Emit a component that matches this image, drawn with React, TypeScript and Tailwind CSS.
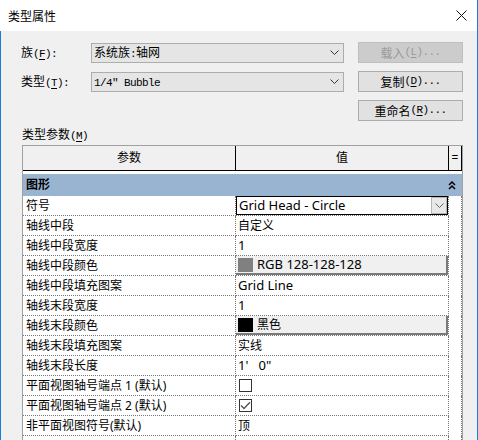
import React from "react";

// 类型属性 dialog (Revit type properties)

const ui = "font-['Noto_Sans_CJK_SC',sans-serif]";
const grid = "font-['Noto_Sans','Noto_Sans_CJK_SC',sans-serif]";

function M({ children }: { children: React.ReactNode }) {
  return (
    <span className="font-['Liberation_Mono',monospace] text-[11px] tracking-[-0.6px]">{children}</span>
  );
}

function U({ children }: { children: React.ReactNode }) {
  return <span className="underline underline-offset-2">{children}</span>;
}

function Chevron({ color = "#333" }: { color?: string }) {
  return (
    <svg width="9" height="5" viewBox="0 0 9 5">
      <path d="M0.5 0.5 L4.5 4.5 L8.5 0.5" fill="none" stroke={color} strokeWidth="1" />
    </svg>
  );
}

function Select({ children }: { children: React.ReactNode }) {
  return (
    <div className="flex h-[20px] w-[253px] items-center justify-between border border-[#adadad] bg-[#e5e5e5] pl-[2px] pr-[4px]">
      <span className="leading-none">{children}</span>
      <Chevron />
    </div>
  );
}

function Btn({ children, disabled }: { children: React.ReactNode; disabled?: boolean }) {
  return (
    <div
      className={
        disabled
          ? "flex h-[21px] w-[105px] items-center justify-center border border-[#bfbfbf] bg-[#cccccc] text-[#9a9a9a]"
          : "flex h-[21px] w-[105px] items-center justify-center border border-[#adadad] bg-[#e1e1e1] text-black"
      }
    >
      {children}
    </div>
  );
}

type Val =
  | { kind: "text"; text: string; latin?: boolean }
  | { kind: "combo"; text: string }
  | { kind: "color"; swatch: string; text: string; latin?: boolean }
  | { kind: "check"; checked: boolean }
  | { kind: "none" };

const rows: { label: string; value: Val }[] = [
  { label: "符号", value: { kind: "combo", text: "Grid Head - Circle" } },
  { label: "轴线中段", value: { kind: "text", text: "自定义" } },
  { label: "轴线中段宽度", value: { kind: "text", text: "1", latin: true } },
  { label: "轴线中段颜色", value: { kind: "color", swatch: "#808080", text: "RGB 128-128-128", latin: true } },
  { label: "轴线中段填充图案", value: { kind: "text", text: "Grid Line", latin: true } },
  { label: "轴线末段宽度", value: { kind: "text", text: "1", latin: true } },
  { label: "轴线末段颜色", value: { kind: "color", swatch: "#000000", text: "黑色" } },
  { label: "轴线末段填充图案", value: { kind: "text", text: "实线" } },
  { label: "轴线末段长度", value: { kind: "text", text: "1'   0\"", latin: true } },
  { label: "平面视图轴号端点 1 (默认)", value: { kind: "check", checked: false } },
  { label: "平面视图轴号端点 2 (默认)", value: { kind: "check", checked: true } },
  { label: "非平面视图符号(默认)", value: { kind: "text", text: "顶" } },
  { label: "", value: { kind: "none" } },
];

function Value({ v }: { v: Val }) {
  if (v.kind === "combo") {
    return (
      <div className="flex h-[19px] w-full items-center justify-between border border-black bg-white pl-[2px]">
        <span className="text-[13px] leading-none">{v.text}</span>
        <div className="flex h-[17px] w-[16px] items-center justify-center border border-[#b5b5b5] bg-[#e8e8e8]">
          <Chevron color="#666" />
        </div>
      </div>
    );
  }
  if (v.kind === "color") {
    return (
      <div className="flex h-[19px] w-full items-center gap-[4px] border-r-2 border-b-2 border-[#7a7a7a] bg-[#f0f0f0] pl-[2px]">
        <div className="h-[14px] w-[15px]" style={{ background: v.swatch }} />
        <span className={v.latin ? "text-[13px] leading-none" : "text-[12px] leading-none"}>{v.text}</span>
      </div>
    );
  }
  if (v.kind === "check") {
    return (
      <div className="ml-[3px] flex h-[13px] w-[13px] items-center justify-center border border-[#333] bg-white">
        {v.checked && (
          <svg width="11" height="9" viewBox="0 0 11 9">
            <path d="M1 4.5 L4 7.5 L10 1.2" fill="none" stroke="#555" strokeWidth="1.4" />
          </svg>
        )}
      </div>
    );
  }
  if (v.kind === "text") {
    return (
      <span className={(v.latin ? "text-[13px]" : "text-[12px]") + " whitespace-pre pl-[2px] leading-none"}>
        {v.text}
      </span>
    );
  }
  return null;
}

export default function App() {
  return (
    <div className={"h-[440px] w-[478px] overflow-hidden border-r border-[#1a7fd4] bg-[#f0f0f0] text-[12px] text-black " + ui}>
      {/* 标题栏 */}
      <div className="flex h-[31px] items-center justify-between bg-white pl-[8px] pr-[10px]">
        <span className="leading-none">类型属性</span>
        <svg width="11" height="11" viewBox="0 0 11 11">
          <path d="M0.5 0.5 L10.5 10.5 M10.5 0.5 L0.5 10.5" stroke="#111" strokeWidth="1" />
        </svg>
      </div>

      <div className="h-[409px] border-l border-[#1a7fd4] pl-[20px] pt-[11px]">
        {/* 族 / 类型 */}
        <div className="flex h-[21px] items-center">
          <span className="w-[70px] leading-none">
            族<M>(</M>
            <M><U>F</U></M>
            <M>):</M>
          </span>
          <Select>系统族<M>:</M>轴网</Select>
          <div className="ml-[14px]">
            <Btn disabled>
              载入<M>(<U>L</U>)...</M>
            </Btn>
          </div>
        </div>
        <div className="mt-[8px] flex h-[21px] items-center">
          <span className="w-[70px] leading-none">
            类型<M>(</M>
            <M><U>T</U></M>
            <M>):</M>
          </span>
          <Select>
            <M>1/4″ Bubble</M>
          </Select>
          <div className="ml-[14px]">
            <Btn>
              复制<M>(<U>D</U>)...</M>
            </Btn>
          </div>
        </div>
        <div className="mt-[8px] flex h-[21px] pl-[337px]">
          <Btn>
            重命名<M>(<U>R</U>)...</M>
          </Btn>
        </div>

        <div className="mt-[6px] h-[18px] pl-[1px] leading-[14px]">
          类型参数<M>(<U>M</U>)</M>
        </div>

        {/* 参数表 */}
        <div className={"ml-[1px] w-[441px] border-t border-l border-r border-[#a0a0a0] bg-white " + grid}>
          <div className="flex h-[25px] border-b border-black bg-[#f0f0f0]">
            <div className="flex w-[213px] items-center justify-center border-r border-black">参数</div>
            <div className="flex w-[213px] items-center justify-center border-r border-black">值</div>
            <div className="flex w-[13px] items-center justify-center border-r border-black">=</div>
          </div>
          <div className="h-[3px]" />
          <div className="flex h-[22px] w-[439px] items-center justify-between bg-[#99b4d1] pl-[3px] pr-[6px]">
            <span className="font-bold">图形</span>
            <svg width="8" height="9" viewBox="0 0 8 9">
              <path d="M1 4 L4 1 L7 4 M1 8 L4 5 L7 8" fill="none" stroke="#000" strokeWidth="1.5" />
            </svg>
          </div>
          {rows.map((r, i) => (
            <div key={i} className="flex h-[20px]">
              <div className="flex w-[213px] items-center border-r border-b border-dotted border-[#777] pl-[3px]">
                <span className="whitespace-pre leading-none">{r.label}</span>
              </div>
              <div className="flex w-[213px] items-center border-r border-b border-dotted border-[#777]">
                <Value v={r.value} />
              </div>
              <div className="w-[13px] border-r border-dotted border-[#777]" />
            </div>
          ))}
        </div>
      </div>
    </div>
  );
}
